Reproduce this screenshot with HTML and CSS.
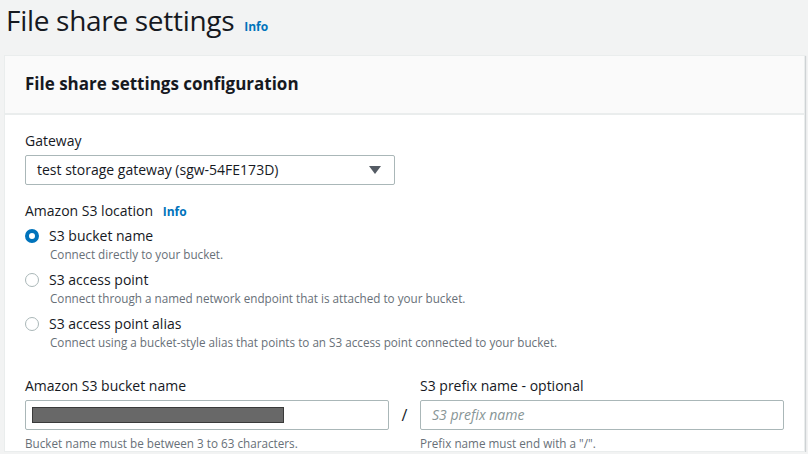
FILE: index.html
```html
<!DOCTYPE html>
<html lang="en">
<head>
    <meta charset="UTF-8">
    <title>File share settings</title>
    <link rel="stylesheet" href="styles.css">
</head>
<body>

<div class="page-header">
    <h1>File share settings</h1>
    <a href="#" class="info-link">Info</a>
</div>

<div class="panel">
    <div class="panel-header">
        <h2>File share settings configuration</h2>
    </div>

    <div class="panel-body">
        <!-- Gateway select -->
        <div class="field">
            <label class="field-label">Gateway</label>
            <div class="select">
                <span>test storage gateway (sgw-54FE173D)</span>
                <svg class="caret" width="12" height="8" viewBox="0 0 12 8"><path d="M0 0h12L6 8z" fill="#545b64"/></svg>
            </div>
        </div>

        <!-- S3 location radios -->
        <div class="field">
            <div class="field-label">Amazon S3 location <a href="#" class="info-link small">Info</a></div>
            <div class="radio-group">
                <div class="radio-item">
                    <span class="radio checked"></span>
                    <div>
                        <div class="radio-label">S3 bucket name</div>
                        <div class="radio-desc">Connect directly to your bucket.</div>
                    </div>
                </div>
                <div class="radio-item">
                    <span class="radio"></span>
                    <div>
                        <div class="radio-label">S3 access point</div>
                        <div class="radio-desc">Connect through a named network endpoint that is attached to your bucket.</div>
                    </div>
                </div>
                <div class="radio-item">
                    <span class="radio"></span>
                    <div>
                        <div class="radio-label">S3 access point alias</div>
                        <div class="radio-desc">Connect using a bucket-style alias that points to an S3 access point connected to your bucket.</div>
                    </div>
                </div>
            </div>
        </div>

        <!-- Bucket + prefix -->
        <div class="bucket-row">
            <div class="bucket-col">
                <label class="field-label">Amazon S3 bucket name</label>
                <div class="input"><span class="redacted"></span></div>
                <div class="hint">Bucket name must be between 3 to 63 characters.</div>
            </div>
            <div class="slash">/</div>
            <div class="bucket-col">
                <label class="field-label">S3 prefix name - optional</label>
                <div class="input placeholder">S3 prefix name</div>
                <div class="hint">Prefix name must end with a "/".</div>
            </div>
        </div>
    </div>
</div>

</body>
</html>
```

FILE: styles.css
```css
/* General Reset */
* {
    margin: 0;
    padding: 0;
    box-sizing: border-box;
}
body {
    font-family: 'Open Sans', sans-serif;
    background-color: #f2f3f3;
    color: #16191f;
    font-size: 14px;
    line-height: 20px;
}

/* Page Header */
.page-header {
    display: flex;
    align-items: baseline;
    gap: 10px;
    padding: 2px 6px 0;
    height: 55px;
}
.page-header h1 {
    font-size: 28px;
    font-weight: 400;
    line-height: 36px;
    letter-spacing: -0.3px;
}
.info-link {
    color: #0073bb;
    font-size: 12px;
    font-weight: 700;
    text-decoration: none;
}
.info-link.small {
    margin-left: 6px;
}

/* Panel */
.panel {
    margin: 0 3px 0 4px;
    background: #fff;
    border: 1px solid #eaeded;
    box-shadow: 1px 1px 1px rgba(0, 27, 43, 0.15);
}
.panel-header {
    background: #fafafa;
    border-bottom: 2px solid #eaeded;
    padding: 16px 20px 17px;
}
.panel-header h2 {
    font-size: 17px;
    font-weight: 700;
    line-height: 24px;
}
.panel-body {
    padding: 16px 20px 0;
}

/* Fields */
.field {
    margin-bottom: 16px;
}
.field-label {
    display: block;
    line-height: 20px;
    margin-bottom: 4px;
}
.select {
    width: 370px;
    height: 30px;
    border: 1px solid #aab7b8;
    border-radius: 2px;
    display: flex;
    align-items: center;
    justify-content: space-between;
    padding: 0 13px 0 11px;
}

/* Radios */
.radio-group {
    display: flex;
    flex-direction: column;
    gap: 8px;
}
.radio-item {
    display: flex;
    gap: 10px;
}
.radio {
    width: 14px;
    height: 14px;
    border-radius: 50%;
    border: 1px solid #aab7b8;
    margin-top: 3px;
    flex-shrink: 0;
}
.radio.checked {
    border: 4px solid #0073bb;
}
.radio-label {
    line-height: 20px;
}
.radio-desc {
    font-size: 11.7px;
    line-height: 16px;
    color: #687078;
    padding-left: 1px;
}

/* Bucket row */
.bucket-row {
    display: flex;
    align-items: flex-start;
    padding-top: 10px;
}
.bucket-col {
    width: 364px;
}
.input {
    height: 30px;
    border: 1px solid #aab7b8;
    border-radius: 2px;
    display: flex;
    align-items: center;
    padding: 0 6px;
}
.input.placeholder {
    color: #879596;
    font-style: italic;
    padding-left: 11px;
}
.redacted {
    width: 252px;
    height: 16px;
    background: #686868;
    border: 1px solid #3a3a3a;
}
.slash {
    width: 31px;
    text-align: center;
    padding-top: 29px;
    font-size: 16px;
}
.hint {
    font-size: 11.7px;
    line-height: 16px;
    color: #687078;
    margin-top: 5px;
}
```
